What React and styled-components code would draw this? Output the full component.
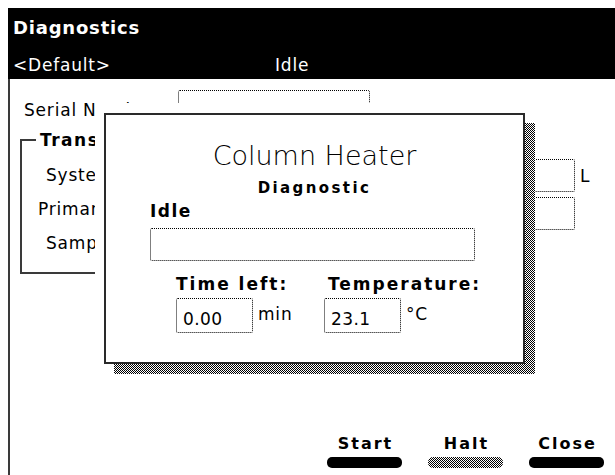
import React from 'react'
import styled, { createGlobalStyle } from 'styled-components'

const Global = createGlobalStyle`
  html, body {
    margin: 0;
    padding: 0;
    background: #fff;
    overflow: hidden;
  }
  body {
    font-family: "DejaVu Sans", "Liberation Sans", sans-serif;
    color: #000;
  }
  * { box-sizing: border-box; }
`

const dither = 'repeating-conic-gradient(#000 0% 25%, #fff 0% 50%) 0 0 / 2px 2px'

export default function App() {
  const rows = [
    { label: 'System Volume:', pad: 24 },
    { label: 'Primary Volume:', pad: 16 },
    { label: 'Sample Volume:', pad: 24 },
  ]

  return (
    <>
      <Global />
      <Window>
        <Header>
          <Title>Diagnostics</Title>
          <StatusRow>
            <Method>&lt;Default&gt;</Method>
            <span>Idle</span>
          </StatusRow>
        </Header>

        <Body>
          <SerialRow>
            <Label>Serial Number:</Label>
            <SerialField />
          </SerialRow>

          <GroupRow>
            <Group>
              <Legend>Transfer</Legend>
              {rows.map(r => (
                <GroupLine key={r.label} $pad={r.pad}>{r.label}</GroupLine>
              ))}
            </Group>
            <FieldCol>
              <UnitRow>
                <VolField />
                <Unit>L</Unit>
              </UnitRow>
              <UnitRow>
                <VolField />
              </UnitRow>
            </FieldCol>
          </GroupRow>

          <ButtonBar>
            <Button>
              <ButtonText>Start</ButtonText>
              <Bar />
            </Button>
            <Button>
              <ButtonText>Halt</ButtonText>
              <Bar $dim />
            </Button>
            <Button>
              <ButtonText>Close</ButtonText>
              <Bar />
            </Button>
          </ButtonBar>

          <Dialog>
            <DialogTitle>Column Heater</DialogTitle>
            <DialogSub>Diagnostic</DialogSub>
            <DialogState>Idle</DialogState>
            <Progress />
            <Readouts>
              <Readout>
                <ReadLabel>Time left:</ReadLabel>
                <ValueRow>
                  <ValueBox>0.00</ValueBox>
                  <ValueUnit>min</ValueUnit>
                </ValueRow>
              </Readout>
              <Readout>
                <ReadLabel $shift={4}>Temperature:</ReadLabel>
                <ValueRow>
                  <ValueBox>23.1</ValueBox>
                  <ValueUnit>°C</ValueUnit>
                </ValueRow>
              </Readout>
            </Readouts>
          </Dialog>
        </Body>
      </Window>
    </>
  )
}

const Window = styled.div`
margin: 8px 0 0 8px;
width: 607px;
height: 467px;
display: flex;
flex-direction: column;`

const Header = styled.header`
background: #000;
color: #fff;
height: 71px;
padding: 9px 0 3px 5px;
display: flex;
flex-direction: column;
gap: 15px;`

const Title = styled.div`
font-weight: bold;
font-size: 18px;
letter-spacing: 0.8px;
line-height: 22px;`

const StatusRow = styled.div`
display: flex;
font-size: 17px;
letter-spacing: 0.8px;
line-height: 22px;`

const Method = styled.span`
width: 262px;`

const Body = styled.section`
position: relative;
flex: 1;
display: flex;
flex-direction: column;
border-left: 2px solid #3a3a3a;
padding-left: 10px;`

const SerialRow = styled.div`
display: flex;
align-items: flex-start;
margin-top: 11px;`

const Label = styled.span`
font-size: 17px;
letter-spacing: 0.8px;
line-height: 30px;
margin-top: 5px;
padding-left: 4px;
width: 158px;
white-space: nowrap;`

const SerialField = styled.div`
width: 192px;
height: 30px;
border: 1px dotted #000;
border-radius: 2px;`

const GroupRow = styled.div`
display: flex;
align-items: flex-start;
margin-top: 5px;`

const Group = styled.fieldset`
margin: 0;
width: 300px;
padding: 8px 0 12px 0;
border: 2px solid #3a3a3a;
min-width: 0;`

const Legend = styled.legend`
font-weight: bold;
font-size: 17px;
letter-spacing: 1.5px;
line-height: 20px;
padding: 0 4px;
margin-left: 14px;
white-space: nowrap;`

const GroupLine = styled.div`
font-size: 17px;
letter-spacing: 0.8px;
line-height: 34px;
white-space: nowrap;
padding-left: ${p => p.$pad}px;`

const FieldCol = styled.div`
display: flex;
flex-direction: column;
gap: 5px;
margin-left: 100px;
padding-top: 29px;`

const UnitRow = styled.div`
display: flex;
align-items: center;`

const VolField = styled.div`
width: 155px;
height: 33px;
border: 1px dotted #000;
border-radius: 2px;`

const Unit = styled.span`
font-size: 17px;
margin-left: 5px;`

const ButtonBar = styled.div`
margin-top: auto;
display: flex;
justify-content: flex-end;
gap: 26px;
padding: 0 11px 7px 0;`

const Button = styled.div`
width: 75px;
display: flex;
flex-direction: column;
align-items: center;`

const ButtonText = styled.span`
font-weight: bold;
font-size: 16px;
letter-spacing: 2px;
line-height: 20px;
padding-left: 2px;`

const Bar = styled.div`
width: 75px;
height: 11px;
margin-top: 3px;
border-radius: 5px;
background: ${p => (p.$dim ? dither : '#000')};`

/* outline is painted above the pseudo layers, so the frame stays on top of the shade;
   the white layer reaches a little past the frame on the top and left, as the window does */
const Dialog = styled.div`
position: absolute;
left: 94px;
top: 34px;
width: 421px;
height: 251px;
outline: 2px solid #2a2a2a;
outline-offset: -2px;
padding: 27px 0 0 46px;
display: flex;
flex-direction: column;
z-index: 1;
&::before {
  content: '';
  position: absolute;
  left: 10px;
  top: 10px;
  right: -10px;
  bottom: -10px;
  background: ${dither};
  z-index: -1;
}
&::after {
  content: '';
  position: absolute;
  left: -9px;
  top: -10px;
  right: 0;
  bottom: 0;
  background: #fff;
  z-index: -1;
}`

const DialogTitle = styled.div`
font-family: "DejaVu Sans ExtraLight", "DejaVu Sans", sans-serif;
font-weight: 200;
font-size: 27px;
line-height: 32px;
text-align: center;
margin-left: -46px;`

const DialogSub = styled.div`
font-weight: bold;
font-size: 15px;
letter-spacing: 2.4px;
line-height: 18px;
text-align: center;
margin: 7px 0 0 -46px;`

const DialogState = styled.div`
font-weight: bold;
font-size: 17px;
letter-spacing: 1.5px;
line-height: 20px;
margin-top: 4px;`

const Progress = styled.div`
width: 325px;
height: 33px;
margin-top: 7px;
border: 1px dotted #000;
border-radius: 2px;`

const Readouts = styled.div`
display: grid;
grid-template-columns: 148px auto;
margin: 13px 0 0 26px;`

const Readout = styled.div`
display: flex;
flex-direction: column;
gap: 4px;`

const ReadLabel = styled.div`
font-weight: bold;
font-size: 17px;
letter-spacing: 2px;
line-height: 20px;
padding-left: ${p => p.$shift || 0}px;`

const ValueRow = styled.div`
display: flex;
align-items: flex-start;`

const ValueBox = styled.div`
width: 77px;
height: 35px;
border: 1px dotted #000;
border-radius: 2px;
display: flex;
align-items: flex-end;
padding: 0 0 3px 6px;
font-size: 17px;
letter-spacing: 0.4px;
line-height: 20px;`

const ValueUnit = styled.span`
font-size: 17px;
letter-spacing: 0.8px;
line-height: 20px;
padding-left: 5px;
margin-top: 6px;`
